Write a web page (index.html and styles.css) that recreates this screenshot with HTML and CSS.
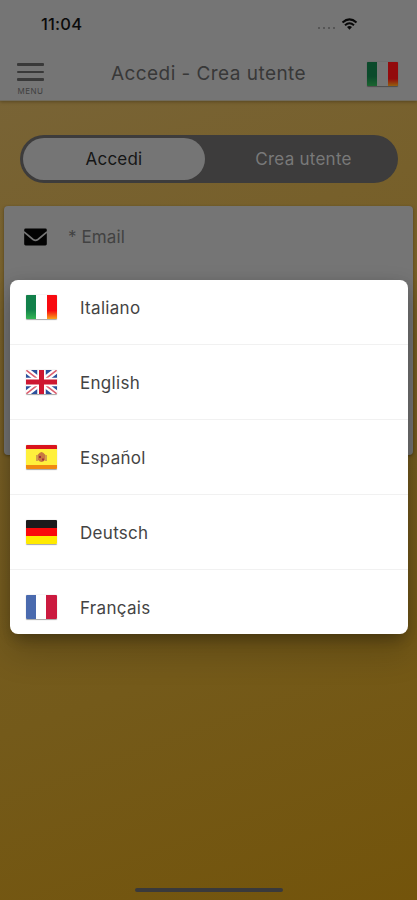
FILE: index.html
```
<!DOCTYPE html>
<html lang="it">
<head>
<meta charset="utf-8">
<meta name="viewport" content="width=device-width, initial-scale=1">
<title>Accedi - Crea utente</title>
<link rel="stylesheet" href="styles.css">
</head>
<body>
<div class="screen">
  <header class="header">
    <div class="status">
      <span class="time">11:04</span>
      <span class="signal">
        <span class="dots"><i></i><i></i><i></i><i></i></span>
        <svg class="wifi" viewBox="0 0 16 12"><path d="M1 4.5Q8-1.7 15 4.5" fill="none" stroke="#080808" stroke-width="2"/><path d="M3.5 7.2Q8 3.3 12.5 7.2" fill="none" stroke="#080808" stroke-width="2"/><path d="M5.5 9Q8 7 10.5 9L8 11.8z" fill="#080808"/></svg>
      </span>
    </div>
    <div class="toolbar">
      <div class="menu"><span class="bars"><i></i><i></i><i></i></span><span class="menu-text">MENU</span></div>
      <h1 class="title">Accedi - Crea utente</h1>
      <span class="flag flag-it flag-dim"></span>
    </div>
  </header>
  <main class="main">
    <div class="tabs">
      <span class="tab tab-active">Accedi</span>
      <span class="tab tab-crea">Crea utente</span>
    </div>
    <section class="card">
      <div class="field">
        <svg class="mail" viewBox="0 0 24 18"><rect x=".2" y=".2" width="23.6" height="17.6" rx="1.5" fill="#030303"/><path d="M0 3.6 9.5 11.6Q12 13.4 14.5 11.6L24 3.6" fill="none" stroke="#757575" stroke-width="1.7"/></svg>
        <span class="label">* Email</span>
      </div>
    </section>
  </main>
  <div class="home"></div>
  <div class="dialog">
    <ul class="list">
      <li class="row"><span class="flag flag-it"></span><span class="name">Italiano</span></li>
      <li class="row">
        <svg class="flag" viewBox="0 0 31 24"><rect width="31" height="24" fill="#2c509c"/><path d="M0 0 31 24M31 0 0 24" stroke="#fff" stroke-width="6"/><path d="M0 0 31 24M31 0 0 24" stroke="#dc6070" stroke-width="1.6"/><path d="M15.5 0V24M0 12H31" stroke="#fff" stroke-width="8.5"/><path d="M15.5 0V24M0 12H31" stroke="#ce1731" stroke-width="5"/></svg>
        <span class="name">English</span></li>
      <li class="row">
        <svg class="flag" viewBox="0 0 31 24"><rect width="31" height="24" fill="#fff03c"/><rect width="31" height="4" fill="#d9141d"/><rect y="20" width="31" height="4" fill="#f08a10"/><path d="M10 10h2v6h-2zM19 10h2v6h-2z" fill="#d3a04c"/><path d="M12 9.5Q15.5 4.5 19 9.5V15Q15.5 19 12 15z" fill="#c77741"/><path d="M13 11h2v2h-2zM16 13.5h2v2h-2z" fill="#a12f3a"/></svg>
        <span class="name">Español</span></li>
      <li class="row"><span class="flag flag-de"></span><span class="name">Deutsch</span></li>
      <li class="row"><span class="flag flag-fr"></span><span class="name">Français</span></li>
    </ul>
  </div>
</div>
</body>
</html>
```
FILE: styles.css
```
* { box-sizing: border-box; }
body { margin: 0; font-family: Inter, "Liberation Sans", sans-serif; }
i { display: block; }

.screen {
  position: relative;
  display: flex;
  flex-direction: column;
  width: 417px;
  height: 900px;
  overflow: hidden;
  background: linear-gradient(160deg, #79653a 0%, #77602b 30%, #745a1a 70%, #73540b 100%);
}

.header {
  height: 101px;
  background: #757575;
  border-bottom: 1px solid #716b5c;
  box-shadow: 0 1px 3px rgba(60, 45, 15, .5);
}
.status {
  display: flex;
  justify-content: space-between;
  align-items: center;
  height: 48px;
  padding: 0 59px 0 41px;
}
.time { font-size: 16.5px; font-weight: 500; color: #0b0b0b; letter-spacing: .2px; }
.signal { display: flex; align-items: center; gap: 6px; }
.dots { display: flex; gap: 3px; padding-top: 8px; }
.dots i { width: 2px; height: 2px; border-radius: 50%; background: #4d4d4d; }
.wifi { width: 17px; height: 12px; }

.toolbar { display: flex; align-items: center; height: 52px; padding: 0 19px 0 17px; }
.menu { display: flex; flex-direction: column; align-items: center; width: 27px; padding-top: 11px; }
.bars { display: grid; gap: 5px; width: 27px; }
.bars i { height: 2.5px; border-radius: 1px; background: #393939; }
.menu-text { margin-top: 6px; font-size: 8px; line-height: 9px; color: #404040; letter-spacing: .5px; }
.title { flex: 1; margin: -2px 0 0 6px; text-align: center; font-size: 19px; font-weight: 400; color: #383838; letter-spacing: .45px; white-space: nowrap; }

.flag { display: block; flex: none; width: 31px; height: 24px; border-radius: 1px; box-shadow: 0 .5px 1px rgba(0, 0, 0, .35); }
.flag-it {
  background:
    linear-gradient(#12804a 0 60%, #35b554 100%) 0 0 / 10px 100% no-repeat,
    linear-gradient(#f80a10 0 65%, #fba21a 100%) 100% 0 / 10px 100% no-repeat,
    #fff;
}
.flag-dim {
  background:
    linear-gradient(#0b4a2b 0 60%, #1b6530 100%) 0 0 / 10px 100% no-repeat,
    linear-gradient(#930a0c 0 70%, #94600f 100%) 100% 0 / 10px 100% no-repeat,
    #777;
}
.flag-de { background: linear-gradient(#1c1a1b 0 32%, #fa0a0c 32% 66%, #ffea00 66%); }
.flag-fr { background: linear-gradient(90deg, #4a6aae 0 33%, #fff 33% 66%, #cb1a3f 66%); }

.main { flex: 1; padding: 34px 4px 0; }
.tabs {
  display: flex;
  width: 378px;
  height: 48px;
  margin: 0 0 0 16px;
  padding: 3px;
  border-radius: 24px;
  background: #3d3c3c;
  font-size: 17px;
}
.tab { display: flex; flex: 1; align-items: center; justify-content: center; }
.tab-active { flex: 0 0 182px; border-radius: 21px; background: #757575; color: #161616; letter-spacing: .2px; }
.tab-crea { color: #797979; letter-spacing: .25px; padding-left: 7px; }

.card {
  height: 249px;
  margin-top: 23px;
  padding: 20px;
  border-radius: 4px;
  background: #757575;
  box-shadow: 0 1px 3px rgba(40, 30, 5, .5);
}
.field { display: flex; align-items: center; gap: 21px; height: 22px; }
.mail { width: 23px; height: 18px; }
.label { font-size: 17px; color: #424242; letter-spacing: .1px; }

.home { align-self: center; width: 148px; height: 4px; margin-bottom: 8px; border-radius: 2px; background: #39393b; }

.dialog {
  position: absolute;
  top: 280px;
  left: 10px;
  width: 398px;
  height: 354px;
  overflow: hidden;
  border-radius: 8px;
  background: #fff;
  box-shadow: 0 11px 15px -7px rgba(0, 0, 0, .2), 0 18px 32px 3px rgba(0, 0, 0, .16), 0 3px 14px rgba(0, 0, 0, .14);
}
.list { margin: -10px 0 0; padding: 0; list-style: none; }
.row { display: flex; align-items: center; gap: 23px; height: 75px; padding-left: 16px; border-bottom: 1px solid #f1f1f1; }
.row:last-child { height: 74px; border: 0; }
.name { padding-top: 1px; font-size: 17px; color: #444; letter-spacing: .3px; }
```
